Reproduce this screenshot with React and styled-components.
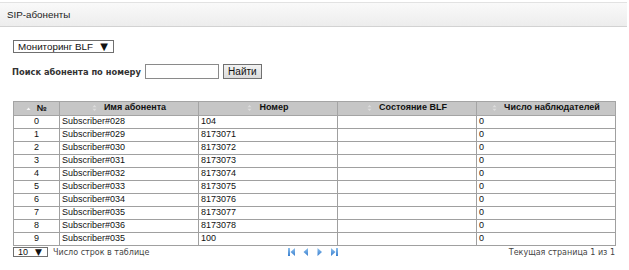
import React from "react";
import styled, { createGlobalStyle } from "styled-components";

const Global = createGlobalStyle`
  html, body { margin: 0; padding: 0; background: #fff; }
  body { font-family: "Liberation Sans", Arial, sans-serif; color: #000; }
`;

const Page = styled.div`
  width: 629px;
  padding-top: 2px;
`;

const TitleBar = styled.div`
  width: 627px;
  box-sizing: border-box;
  height: 25px;
  border-top: 1px solid #e2e2e2;
  border-bottom: 1px solid #d2d2d2;
  background: linear-gradient(#f9f9f9, #ededed);
  display: flex;
  align-items: center;
  padding-left: 7px;
  font-size: 9.8px;
  color: #222;
`;

const Content = styled.div`
  padding: 0 14px 0 13px;
  display: flex;
  flex-direction: column;
`;

const FakeSelect = styled.div`
  box-sizing: border-box;
  width: ${(p) => p.$w}px;
  height: ${(p) => p.$h}px;
  border: 1px solid #6f6f6f;
  background: #fff;
  display: flex;
  align-items: center;
  justify-content: space-between;
  padding: 0 ${(p) => p.$pr}px 0 4px;
  font-size: ${(p) => p.$fs}px;
  color: #111;
  flex: none;
`;

const Arrow = styled.span`
  font-family: "DejaVu Sans", sans-serif;
  font-size: ${(p) => p.$size}px;
  line-height: 1;
  color: #111;
`;

const ModeRow = styled.div`
  margin-top: 13px;
  display: flex;
`;

const SearchRow = styled.div`
  margin-top: 11px;
  display: flex;
  align-items: center;
  height: 15px;
`;

const Label = styled.span`
  font-family: "DejaVu Sans", Verdana, sans-serif;
  font-weight: bold;
  font-size: 8.3px;
  color: #333;
  margin-left: -1px;
  margin-right: 4px;
`;

const Input = styled.input`
  box-sizing: border-box;
  width: 74px;
  height: 15px;
  border: 1px solid #8a8a8a;
  padding: 0 2px;
  margin: 0;
  outline: none;
`;

const Button = styled.button`
  box-sizing: border-box;
  margin: 0 0 0 4px;
  width: 39px;
  height: 15px;
  border: 1px solid #707070;
  background: linear-gradient(#f2f2f2, #dcdcdc);
  font-family: "Liberation Sans", Arial, sans-serif;
  font-size: 10px;
  color: #111;
  padding: 0;
  display: flex;
  align-items: center;
  justify-content: center;
`;

const Table = styled.table`
  margin-top: 22px;
  border-collapse: collapse;
  table-layout: fixed;
  width: 602px;
  font-size: 9px;
`;

const Th = styled.th`
  height: 12px;
  padding: 0;
  background: #c6c6c6;
  border: 1px solid #a4a4a4;
  border-left-color: #e2e2e2;
  font-weight: bold;
  font-size: 9px;
  color: #111;
  line-height: 11px;
  white-space: nowrap;
  &:first-child { border-left-color: #a4a4a4; }
`;

const ThInner = styled.span`
  display: inline-flex;
  align-items: center;
  gap: ${(p) => (p.$first ? 5 : 7)}px;
`;

const Td = styled.td`
  height: 12px;
  padding: 0 2px;
  border: 1px solid #a0a0a0;
  line-height: 11px;
  text-align: ${(p) => (p.$center ? "center" : "left")};
  white-space: nowrap;
  overflow: hidden;
  color: #111;
`;

const Footer = styled.div`
  display: flex;
  align-items: center;
  height: 11px;
  margin-top: 1px;
`;

const SmallText = styled.span`
  font-family: "DejaVu Sans", Verdana, sans-serif;
  font-size: 8px;
  color: #444;
`;

const RowsLabel = styled(SmallText)`
  margin-left: 5px;
`;

const Pager = styled.div`
  display: flex;
  align-items: center;
  gap: 8px;
  margin-left: 139px;
`;

const PageInfo = styled(SmallText)`
  margin-left: auto;
`;

const SortIcon = ({ up }) =>
  up ? (
    <svg width="5" height="5" viewBox="0 0 5 5">
      <path d="M0.5 4 L2.5 1.5 L4.5 4 Z" fill="#f4f4f4" />
    </svg>
  ) : (
    <svg width="5" height="8" viewBox="0 0 5 8">
      <path d="M0.5 3.3 L2.5 1 L4.5 3.3 Z" fill="#dcdcdc" />
      <path d="M0.5 4.7 L2.5 7 L4.5 4.7 Z" fill="#dcdcdc" />
    </svg>
  );

const PagerIcon = ({ kind }) => {
  const fill = `url(#g-${kind})`;
  const shapes = {
    first: (
      <>
        <rect x="0" y="0" width="2" height="8" fill={fill} />
        <path d="M7 0 L7 8 L2.5 4 Z" fill={fill} />
      </>
    ),
    prev: <path d="M5 0 L5 8 L0.5 4 Z" fill={fill} />,
    next: <path d="M0.5 0 L0.5 8 L5 4 Z" fill={fill} />,
    last: (
      <>
        <path d="M0 0 L0 8 L4.5 4 Z" fill={fill} />
        <rect x="5" y="0" width="2" height="8" fill={fill} />
      </>
    ),
  };
  const w = kind === "first" || kind === "last" ? 7 : 6;
  return (
    <svg width={w} height="8" viewBox={`0 0 ${w} 8`}>
      <defs>
        <linearGradient id={`g-${kind}`} x1="0" y1="0" x2="0" y2="1">
          <stop offset="0" stopColor="#8cc0ee" />
          <stop offset="1" stopColor="#3a7fcf" />
        </linearGradient>
      </defs>
      {shapes[kind]}
    </svg>
  );
};

const rows = [
  ["0", "Subscriber#028", "104"],
  ["1", "Subscriber#029", "8173071"],
  ["2", "Subscriber#030", "8173072"],
  ["3", "Subscriber#031", "8173073"],
  ["4", "Subscriber#032", "8173074"],
  ["5", "Subscriber#033", "8173075"],
  ["6", "Subscriber#034", "8173076"],
  ["7", "Subscriber#035", "8173077"],
  ["8", "Subscriber#036", "8173078"],
  ["9", "Subscriber#035", "100"],
];

const headers = ["№", "Имя абонента", "Номер", "Состояние BLF", "Число наблюдателей"];
const widths = [46, 139, 139, 139, 139];

export default function App() {
  return (
    <Page>
      <Global />
      <TitleBar>SIP-абоненты</TitleBar>
      <Content>
        <ModeRow>
          <FakeSelect $w={101} $h={13} $fs={9.8} $pr={5}>
            <span>Мониторинг BLF</span>
            <Arrow $size={10}>▼</Arrow>
          </FakeSelect>
        </ModeRow>
        <SearchRow>
          <Label>Поиск абонента по номеру</Label>
          <Input type="text" />
          <Button>Найти</Button>
        </SearchRow>
        <Table>
          <colgroup>
            {widths.map((w, i) => (
              <col key={i} style={{ width: w }} />
            ))}
          </colgroup>
          <thead>
            <tr>
              {headers.map((h, i) => (
                <Th key={h}>
                  <ThInner $first={i === 0}>
                    <SortIcon up={i === 0} />
                    {h}
                  </ThInner>
                </Th>
              ))}
            </tr>
          </thead>
          <tbody>
            {rows.map((r) => (
              <tr key={r[0]}>
                <Td $center>{r[0]}</Td>
                <Td>{r[1]}</Td>
                <Td>{r[2]}</Td>
                <Td></Td>
                <Td>0</Td>
              </tr>
            ))}
          </tbody>
        </Table>
        <Footer>
          <FakeSelect $w={35} $h={10} $fs={9} $pr={5}>
            <span>10</span>
            <Arrow $size={9}>▼</Arrow>
          </FakeSelect>
          <RowsLabel>Число строк в таблице</RowsLabel>
          <Pager>
            <PagerIcon kind="first" />
            <PagerIcon kind="prev" />
            <PagerIcon kind="next" />
            <PagerIcon kind="last" />
          </Pager>
          <PageInfo>Текущая страница 1 из 1</PageInfo>
        </Footer>
      </Content>
    </Page>
  );
}
